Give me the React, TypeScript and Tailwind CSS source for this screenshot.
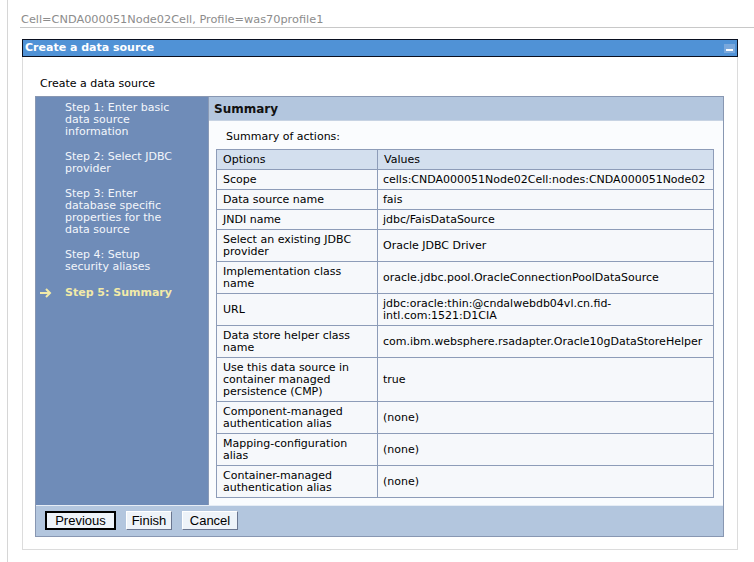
import React from "react";

const rows: { o: React.ReactNode; v: React.ReactNode }[] = [
  { o: "Scope", v: "cells:CNDA000051Node02Cell:nodes:CNDA000051Node02" },
  { o: "Data source name", v: "fais" },
  { o: "JNDI name", v: "jdbc/FaisDataSource" },
  { o: <>Select an existing JDBC<br />provider</>, v: "Oracle JDBC Driver" },
  { o: <>Implementation class<br />name</>, v: "oracle.jdbc.pool.OracleConnectionPoolDataSource" },
  { o: "URL", v: <>jdbc:oracle:thin:@cndalwebdb04vl.cn.fid-<br />intl.com:1521:D1CIA</> },
  { o: <>Data store helper class<br />name</>, v: "com.ibm.websphere.rsadapter.Oracle10gDataStoreHelper" },
  { o: <>Use this data source in<br />container managed<br />persistence (CMP)</>, v: "true" },
  { o: <>Component-managed<br />authentication alias</>, v: "(none)" },
  { o: <>Mapping-configuration<br />alias</>, v: "(none)" },
  { o: <>Container-managed<br />authentication alias</>, v: "(none)" },
];

const steps: React.ReactNode[] = [
  <>Step 1: Enter basic<br />data source<br />information</>,
  <>Step 2: Select JDBC<br />provider</>,
  <>Step 3: Enter<br />database specific<br />properties for the<br />data source</>,
  <>Step 4: Setup<br />security aliases</>,
];

export default function App() {
  return (
    <div className="w-[754px] h-[562px] bg-white overflow-hidden font-['DejaVu_Sans',Verdana,sans-serif] text-[11px] leading-[12px] text-black">
      <div className="ml-[7px] h-full border-l border-[#d6d6d6] pl-[12px]">
        <div className="pt-[13px] pl-[1px] border-b border-[#c8c8c8] text-[11.3px] leading-[14px] text-[#8c8c8c] whitespace-nowrap">
          Cell=CNDA000051Node02Cell, Profile=was70profile1
        </div>
        <div className="mt-[11px] ml-[2px] w-[716px]">
          <div className="h-[18px] border border-[#0a1020] bg-[#5092d6] flex items-center justify-between pl-[2px] pr-[2px]">
            <span className="font-bold text-white text-[11px] leading-[12px]">Create a data source</span>
            <span className="w-[11px] h-[9px] bg-[#7aa8dc] flex items-end justify-center pb-[2px]">
              <span className="w-[7px] h-[2px] bg-white" />
            </span>
          </div>
          <div className="border-x border-b border-[#dcdcdc] pt-[20px] pb-[12px]">
            <div className="pl-[17px] leading-[14px]">Create a data source</div>
            <div className="mt-[5px] ml-[12px] w-[689px] border border-[#8897b2] flex flex-col">
              <div className="flex">
                <div className="w-[172px] bg-[#6f8cb8] pt-[5px] text-[#f3f6fb] flex flex-col gap-[13px]">
                  {steps.map((s, i) => (
                    <div key={i} className="pl-[29px] whitespace-nowrap">{s}</div>
                  ))}
                  <div className="mt-[1px] flex items-center pl-[4px] text-[#f2eaa8] font-bold">
                    <span className="w-[25px] flex items-center">
                      <svg width="12" height="10" viewBox="0 0 12 10" fill="none" stroke="#f2eaa8" strokeWidth="2">
                        <path d="M0 5h10" />
                        <path d="M6 1l4 4-4 4" />
                      </svg>
                    </span>
                    <span>Step 5: Summary</span>
                  </div>
                </div>
                <div className="flex-1 bg-[#fafcfe] border-l border-[#8a9ab6]">
                  <div className="h-[24px] bg-[#b3c6de] border-b border-[#c7d3e3] flex items-center pl-[5px] font-bold text-[12px] text-[#111]">
                    Summary
                  </div>
                  <div className="pt-[9px] pl-[17px] leading-[14px]">Summary of actions:</div>
                  <div className="mt-[5px] ml-[7px] pb-[7px]">
                    <table className="w-[498px] table-fixed border-collapse border border-[#8d9cb8]">
                      <colgroup>
                        <col className="w-[161px]" />
                        <col />
                      </colgroup>
                      <thead>
                        <tr className="bg-[#d3dfee]">
                          <th className="border border-[#8d9cb8] pl-[6px] pt-[4px] pb-[3px] text-left font-normal">Options</th>
                          <th className="border border-[#8d9cb8] pl-[6px] pt-[4px] pb-[3px] text-left font-normal">Values</th>
                        </tr>
                      </thead>
                      <tbody>
                        {rows.map((r, i) => (
                          <tr key={i} className="bg-[#f6f8fb]">
                            <td className="border border-[#8d9cb8] pl-[6px] pt-[4px] pb-[3px] align-middle whitespace-nowrap">{r.o}</td>
                            <td className="border border-[#8d9cb8] pl-[5px] pt-[4px] pb-[3px] align-middle whitespace-nowrap">{r.v}</td>
                          </tr>
                        ))}
                      </tbody>
                    </table>
                  </div>
                </div>
              </div>
              <div className="h-[31px] bg-[#b3c6de] border-t border-[#e6edf5] flex items-start pt-[5px] pl-[9px] gap-[10px] font-['Liberation_Sans',Arial,sans-serif] text-[13px] leading-[14px]">
                <button className="h-[19px] w-[71px] border-2 border-black bg-[#eef3f9] text-black flex items-center justify-center">Previous</button>
                <button className="h-[19px] w-[46px] border border-t-[#ffffff] border-l-[#ffffff] border-r-[#6a7690] border-b-[#6a7690] bg-[#eef3f9] text-black flex items-center justify-center">Finish</button>
                <button className="h-[19px] w-[56px] border border-t-[#ffffff] border-l-[#ffffff] border-r-[#6a7690] border-b-[#6a7690] bg-[#eef3f9] text-black flex items-center justify-center">Cancel</button>
              </div>
            </div>
          </div>
        </div>
      </div>
    </div>
  );
}
